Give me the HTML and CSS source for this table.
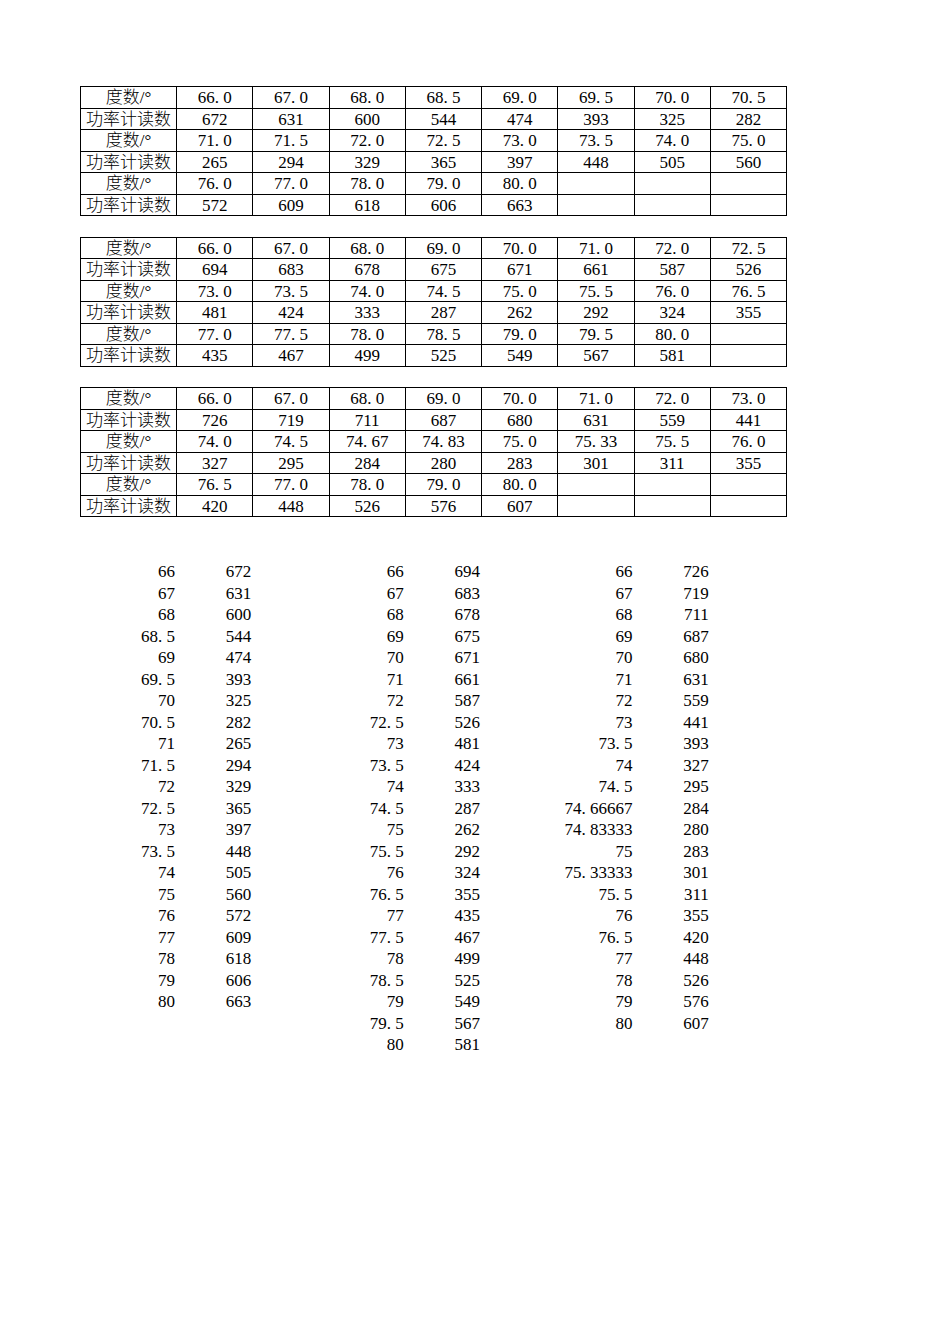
FILE: index.html
```html
<!DOCTYPE html>
<html lang="zh">
<head>
<meta charset="utf-8">
<title>功率计读数</title>
<link rel="stylesheet" href="styles.css">
</head>
<body>
<div class="page">
  <div class="sheet">
    <div class="c h">度数/°</div><div class="c">66<span class="pt">.</span>0</div><div class="c">67<span class="pt">.</span>0</div><div class="c">68<span class="pt">.</span>0</div><div class="c">68<span class="pt">.</span>5</div><div class="c">69<span class="pt">.</span>0</div><div class="c">69<span class="pt">.</span>5</div><div class="c">70<span class="pt">.</span>0</div><div class="c">70<span class="pt">.</span>5</div>
    <div class="c h">功率计读数</div><div class="c">672</div><div class="c">631</div><div class="c">600</div><div class="c">544</div><div class="c">474</div><div class="c">393</div><div class="c">325</div><div class="c">282</div>
    <div class="c h">度数/°</div><div class="c">71<span class="pt">.</span>0</div><div class="c">71<span class="pt">.</span>5</div><div class="c">72<span class="pt">.</span>0</div><div class="c">72<span class="pt">.</span>5</div><div class="c">73<span class="pt">.</span>0</div><div class="c">73<span class="pt">.</span>5</div><div class="c">74<span class="pt">.</span>0</div><div class="c">75<span class="pt">.</span>0</div>
    <div class="c h">功率计读数</div><div class="c">265</div><div class="c">294</div><div class="c">329</div><div class="c">365</div><div class="c">397</div><div class="c">448</div><div class="c">505</div><div class="c">560</div>
    <div class="c h">度数/°</div><div class="c">76<span class="pt">.</span>0</div><div class="c">77<span class="pt">.</span>0</div><div class="c">78<span class="pt">.</span>0</div><div class="c">79<span class="pt">.</span>0</div><div class="c">80<span class="pt">.</span>0</div><div class="c"></div><div class="c"></div><div class="c"></div>
    <div class="c h">功率计读数</div><div class="c">572</div><div class="c">609</div><div class="c">618</div><div class="c">606</div><div class="c">663</div><div class="c"></div><div class="c"></div><div class="c"></div>
  </div>

  <div class="sheet">
    <div class="c h">度数/°</div><div class="c">66<span class="pt">.</span>0</div><div class="c">67<span class="pt">.</span>0</div><div class="c">68<span class="pt">.</span>0</div><div class="c">69<span class="pt">.</span>0</div><div class="c">70<span class="pt">.</span>0</div><div class="c">71<span class="pt">.</span>0</div><div class="c">72<span class="pt">.</span>0</div><div class="c">72<span class="pt">.</span>5</div>
    <div class="c h">功率计读数</div><div class="c">694</div><div class="c">683</div><div class="c">678</div><div class="c">675</div><div class="c">671</div><div class="c">661</div><div class="c">587</div><div class="c">526</div>
    <div class="c h">度数/°</div><div class="c">73<span class="pt">.</span>0</div><div class="c">73<span class="pt">.</span>5</div><div class="c">74<span class="pt">.</span>0</div><div class="c">74<span class="pt">.</span>5</div><div class="c">75<span class="pt">.</span>0</div><div class="c">75<span class="pt">.</span>5</div><div class="c">76<span class="pt">.</span>0</div><div class="c">76<span class="pt">.</span>5</div>
    <div class="c h">功率计读数</div><div class="c">481</div><div class="c">424</div><div class="c">333</div><div class="c">287</div><div class="c">262</div><div class="c">292</div><div class="c">324</div><div class="c">355</div>
    <div class="c h">度数/°</div><div class="c">77<span class="pt">.</span>0</div><div class="c">77<span class="pt">.</span>5</div><div class="c">78<span class="pt">.</span>0</div><div class="c">78<span class="pt">.</span>5</div><div class="c">79<span class="pt">.</span>0</div><div class="c">79<span class="pt">.</span>5</div><div class="c">80<span class="pt">.</span>0</div><div class="c"></div>
    <div class="c h">功率计读数</div><div class="c">435</div><div class="c">467</div><div class="c">499</div><div class="c">525</div><div class="c">549</div><div class="c">567</div><div class="c">581</div><div class="c"></div>
  </div>

  <div class="sheet">
    <div class="c h">度数/°</div><div class="c">66<span class="pt">.</span>0</div><div class="c">67<span class="pt">.</span>0</div><div class="c">68<span class="pt">.</span>0</div><div class="c">69<span class="pt">.</span>0</div><div class="c">70<span class="pt">.</span>0</div><div class="c">71<span class="pt">.</span>0</div><div class="c">72<span class="pt">.</span>0</div><div class="c">73<span class="pt">.</span>0</div>
    <div class="c h">功率计读数</div><div class="c">726</div><div class="c">719</div><div class="c">711</div><div class="c">687</div><div class="c">680</div><div class="c">631</div><div class="c">559</div><div class="c">441</div>
    <div class="c h">度数/°</div><div class="c">74<span class="pt">.</span>0</div><div class="c">74<span class="pt">.</span>5</div><div class="c">74<span class="pt">.</span>67</div><div class="c">74<span class="pt">.</span>83</div><div class="c">75<span class="pt">.</span>0</div><div class="c">75<span class="pt">.</span>33</div><div class="c">75<span class="pt">.</span>5</div><div class="c">76<span class="pt">.</span>0</div>
    <div class="c h">功率计读数</div><div class="c">327</div><div class="c">295</div><div class="c">284</div><div class="c">280</div><div class="c">283</div><div class="c">301</div><div class="c">311</div><div class="c">355</div>
    <div class="c h">度数/°</div><div class="c">76<span class="pt">.</span>5</div><div class="c">77<span class="pt">.</span>0</div><div class="c">78<span class="pt">.</span>0</div><div class="c">79<span class="pt">.</span>0</div><div class="c">80<span class="pt">.</span>0</div><div class="c"></div><div class="c"></div><div class="c"></div>
    <div class="c h">功率计读数</div><div class="c">420</div><div class="c">448</div><div class="c">526</div><div class="c">576</div><div class="c">607</div><div class="c"></div><div class="c"></div><div class="c"></div>
  </div>

  <div class="lists">
    <div class="list list-a">
      <div class="v">66</div><div class="v">672</div>
      <div class="v">67</div><div class="v">631</div>
      <div class="v">68</div><div class="v">600</div>
      <div class="v">68<span class="pt">.</span>5</div><div class="v">544</div>
      <div class="v">69</div><div class="v">474</div>
      <div class="v">69<span class="pt">.</span>5</div><div class="v">393</div>
      <div class="v">70</div><div class="v">325</div>
      <div class="v">70<span class="pt">.</span>5</div><div class="v">282</div>
      <div class="v">71</div><div class="v">265</div>
      <div class="v">71<span class="pt">.</span>5</div><div class="v">294</div>
      <div class="v">72</div><div class="v">329</div>
      <div class="v">72<span class="pt">.</span>5</div><div class="v">365</div>
      <div class="v">73</div><div class="v">397</div>
      <div class="v">73<span class="pt">.</span>5</div><div class="v">448</div>
      <div class="v">74</div><div class="v">505</div>
      <div class="v">75</div><div class="v">560</div>
      <div class="v">76</div><div class="v">572</div>
      <div class="v">77</div><div class="v">609</div>
      <div class="v">78</div><div class="v">618</div>
      <div class="v">79</div><div class="v">606</div>
      <div class="v">80</div><div class="v">663</div>
    </div>
    <div class="list list-b">
      <div class="v">66</div><div class="v">694</div>
      <div class="v">67</div><div class="v">683</div>
      <div class="v">68</div><div class="v">678</div>
      <div class="v">69</div><div class="v">675</div>
      <div class="v">70</div><div class="v">671</div>
      <div class="v">71</div><div class="v">661</div>
      <div class="v">72</div><div class="v">587</div>
      <div class="v">72<span class="pt">.</span>5</div><div class="v">526</div>
      <div class="v">73</div><div class="v">481</div>
      <div class="v">73<span class="pt">.</span>5</div><div class="v">424</div>
      <div class="v">74</div><div class="v">333</div>
      <div class="v">74<span class="pt">.</span>5</div><div class="v">287</div>
      <div class="v">75</div><div class="v">262</div>
      <div class="v">75<span class="pt">.</span>5</div><div class="v">292</div>
      <div class="v">76</div><div class="v">324</div>
      <div class="v">76<span class="pt">.</span>5</div><div class="v">355</div>
      <div class="v">77</div><div class="v">435</div>
      <div class="v">77<span class="pt">.</span>5</div><div class="v">467</div>
      <div class="v">78</div><div class="v">499</div>
      <div class="v">78<span class="pt">.</span>5</div><div class="v">525</div>
      <div class="v">79</div><div class="v">549</div>
      <div class="v">79<span class="pt">.</span>5</div><div class="v">567</div>
      <div class="v">80</div><div class="v">581</div>
    </div>
    <div class="list list-c">
      <div class="v">66</div><div class="v">726</div>
      <div class="v">67</div><div class="v">719</div>
      <div class="v">68</div><div class="v">711</div>
      <div class="v">69</div><div class="v">687</div>
      <div class="v">70</div><div class="v">680</div>
      <div class="v">71</div><div class="v">631</div>
      <div class="v">72</div><div class="v">559</div>
      <div class="v">73</div><div class="v">441</div>
      <div class="v">73<span class="pt">.</span>5</div><div class="v">393</div>
      <div class="v">74</div><div class="v">327</div>
      <div class="v">74<span class="pt">.</span>5</div><div class="v">295</div>
      <div class="v">74<span class="pt">.</span>66667</div><div class="v">284</div>
      <div class="v">74<span class="pt">.</span>83333</div><div class="v">280</div>
      <div class="v">75</div><div class="v">283</div>
      <div class="v">75<span class="pt">.</span>33333</div><div class="v">301</div>
      <div class="v">75<span class="pt">.</span>5</div><div class="v">311</div>
      <div class="v">76</div><div class="v">355</div>
      <div class="v">76<span class="pt">.</span>5</div><div class="v">420</div>
      <div class="v">77</div><div class="v">448</div>
      <div class="v">78</div><div class="v">526</div>
      <div class="v">79</div><div class="v">576</div>
      <div class="v">80</div><div class="v">607</div>
    </div>
  </div>
</div>
</body>
</html>
```

FILE: styles.css
```css
html, body {
  margin: 0;
  padding: 0;
  background: #ffffff;
}

body {
  font-family: "Liberation Serif", "Noto Sans CJK SC", serif;
  font-size: 17px;
  color: #000000;
}

.page {
  padding: 86px 0 0 80px;
}

.sheet {
  display: grid;
  grid-template-columns: 96px repeat(8, 76.25px);
  grid-auto-rows: 21.5px;
  width: max-content;
  border-top: 1px solid #000;
  border-left: 1px solid #000;
  margin-bottom: 20.5px;
}

.c {
  box-sizing: border-box;
  border-right: 1px solid #000;
  border-bottom: 1px solid #000;
  text-align: center;
  padding-top: 1px;
  line-height: 19.5px;
  white-space: nowrap;
  overflow: hidden;
}

.h {
  font-weight: 300;
}

.pt {
  display: inline-block;
  width: 0.5em;
  text-align: left;
}

.lists {
  display: grid;
  grid-template-columns: 97px repeat(8, 76.25px);
  align-items: start;
  margin-top: 42px;
}

.list {
  display: grid;
  grid-auto-rows: 21.5px;
}

.list-a {
  grid-column: 1 / 3;
  grid-template-columns: 97px 76.25px;
}

.list-b {
  grid-column: 4 / 6;
  grid-template-columns: 76.25px 76.25px;
}

.list-c {
  grid-column: 7 / 9;
  grid-template-columns: 76.25px 76.25px;
}

.v {
  text-align: right;
  padding: 5px 2px 0 0;
  line-height: 16.5px;
  white-space: nowrap;
}
```
